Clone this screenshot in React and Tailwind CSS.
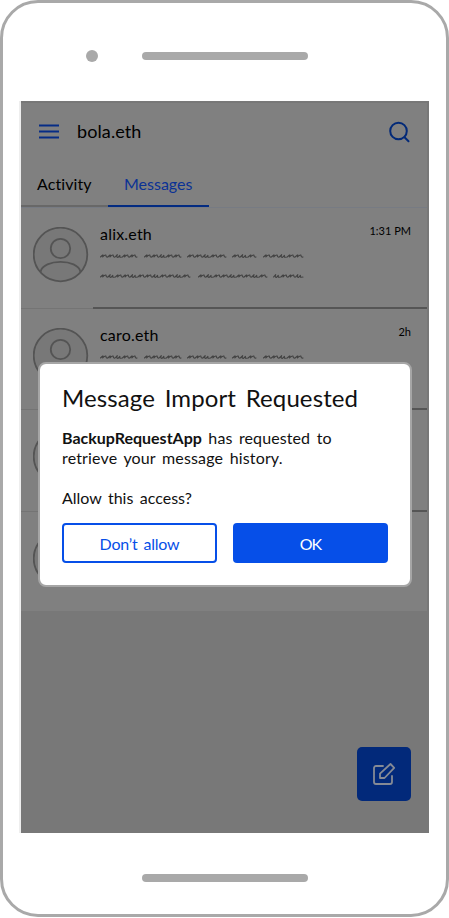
import React from "react";

const LINE_ONE = [[0, 37], [44, 37], [87, 39], [132, 24], [163, 40]];
const LINE_TWO = [[0, 90], [98, 69], [173, 30]];

// One handwritten placeholder word: arches and hooks joined by flat tails.
function scribble(x, width, y) {
  const count = Math.round(width / 7.6);
  const s = width / count;
  let d = `M${x} ${y + 1.2}`;
  for (let i = 0; i < count; i++) {
    d +=
      (i + count) % 3 === 1
        ? ` l${s * 0.3} -2.4 c-${s * 0.05} 1 -${s * 0.15} 3 ${s * 0.1} 2.8 l${s * 0.25} -2 c0 1 -${s * 0.05} 2 ${s * 0.1} 1.8 l${s * 0.25} -0.2`
        : ` l${s * 0.3} -2 c${s * 0.1} -0.2 ${s * 0.02} 1 0 2 c${s * 0.2} -2 ${s * 0.45} -2.4 ${s * 0.45} -1.4 c0 1.2 ${s * 0.1} 1.8 ${s * 0.25} 1.4`;
  }
  return d;
}

function Scribbles() {
  return (
    <svg className="block h-[34px] w-[206px]" viewBox="0 0 206 34" fill="none" stroke="#414141" strokeWidth="1.1" strokeLinecap="round" strokeLinejoin="round">
      {LINE_ONE.map(([x, w]) => <path key={x} d={scribble(x + 0.5, w - 0.5, 9.8)} />)}
      {LINE_TWO.map(([x, w]) => <path key={x} d={scribble(x + 0.5, w - 0.5, 29.8)} />)}
    </svg>
  );
}

function Avatar() {
  return (
    <svg className="ml-3 mt-[19px] block h-[56px] w-[56px] shrink-0" viewBox="0 0 56 56" fill="#787878" stroke="#545454" strokeWidth="1.8">
      <circle cx="27.5" cy="27.5" r="26.8" />
      <circle cx="27.5" cy="21.5" r="9.7" />
      <path d="M7.5 45C10 31.5 45 31.5 47.5 45" fill="none" />
    </svg>
  );
}

function Row({ name, time, last }) {
  return (
    <div className="flex h-[101.2px] shrink-0">
      <div className={`w-[72px] shrink-0 ${last ? "" : "border-b border-[#747474]"}`}>
        <Avatar />
      </div>
      <div className={`flex flex-1 justify-between pl-[7px] pr-4 ${last ? "" : "border-b-2 border-[#555]"}`}>
        <div className="pt-[14.3px]">
          <div className="h-6 text-[16px] leading-6 tracking-[0.2px]">{name}</div>
          <Scribbles />
        </div>
        <div className="whitespace-nowrap pt-[13.3px] text-[11px] leading-5">{time}</div>
      </div>
    </div>
  );
}

export default function App() {
  return (
    <div className="h-[918px] w-[449px] overflow-hidden bg-white font-['Lato','Noto_Sans',sans-serif] text-black">
      <div className="relative flex h-[917px] w-[449px] flex-col rounded-[38px] border-[3px] border-[#a9a9a9] pl-4">
        <div className="flex h-[98px] shrink-0 items-start">
          <div className="ml-[67px] mt-[47px] h-3 w-3 rounded-full bg-[#a9a9a9]" />
          <div className="ml-11 mt-[49px] h-[8px] w-[166px] rounded-full bg-[#a9a9a9]" />
        </div>

        <div className="flex h-[732px] w-[410px] shrink-0 flex-col border-l-2 border-[#eee] bg-[#787878]">
          <div className="mr-[2px] mt-[2px] h-[508px] shrink-0 overflow-hidden bg-[#808080]">
            <div className="flex h-[57px] items-center pl-[18px] pr-[17px]">
              <svg className="mt-1 h-5 w-5" viewBox="0 0 20 20" stroke="#062c86" strokeWidth="2">
                <path d="M0 1.5H20M0 7.5H20M0 13.5H20" />
              </svg>
              <div className="-mt-px ml-[18px] text-[18px] leading-6 tracking-[0.1px]">bola.eth</div>
              <svg className="ml-auto h-[22px] w-[22px]" viewBox="0 0 22 22" fill="none" stroke="#022978" strokeWidth="2" strokeLinecap="round">
                <circle cx="10.5" cy="10" r="8.3" />
                <path d="M16.5 16.3L20.5 20.3" />
              </svg>
            </div>
            <div className="flex h-[48px] items-start border-b border-[#777b83] text-[16px]">
              <div className="h-[47px] w-[87px] border-b-2 border-[#686868] pl-4 pt-[12px] leading-6 tracking-[0.1px]">Activity</div>
              <div className="h-[47px] w-[101px] border-b-2 border-[#032b81] pl-4 pt-[12px] leading-6 text-[#0b3295]">Messages</div>
            </div>
            <Row name="alix.eth" time="1:31 PM" />
            <Row name="caro.eth" time="2h" />
            <Row name="" time="" />
            <Row name="" time="" last />
          </div>
          <div className="ml-auto mr-[18px] mt-[136px] flex h-[54px] w-[54px] items-center justify-center rounded-[5px] bg-[#02297a]">
            <svg className="h-6 w-6" viewBox="0 0 24 24" fill="none" stroke="#858a95" strokeWidth="1.8" strokeLinejoin="round" strokeLinecap="round">
              <path d="M11 4H4a2 2 0 0 0-2 2v14a2 2 0 0 0 2 2h14a2 2 0 0 0 2-2v-6" />
              <path d="M18.5 2L22.2 5.8L12.5 16H8V11.7Z" />
            </svg>
          </div>
        </div>
        <div className="ml-[123px] mt-[41px] h-[8px] w-[166px] rounded-full bg-[#a9a9a9]" />

        <div role="dialog" className="absolute left-[35px] top-[359px] h-[225px] w-[374px] whitespace-nowrap rounded-[8px] border-2 border-[#a6a6a6] bg-white px-[22px] pt-[18px] text-[#111]">
          <h1 className="text-[24px] leading-8 tracking-[0.1px] [word-spacing:3.5px]">Message Import Requested</h1>
          <p className="mt-[14px] text-[16px] leading-5 tracking-[0.1px] [word-spacing:2.3px]"><b className="font-bold tracking-normal">BackupRequestApp</b> has requested to<br /><span className="tracking-[0.15px]">retrieve your message history.</span></p>
          <p className="mt-5 text-[16px] leading-5 [word-spacing:2.3px]">Allow this access?</p>
          <div className="mt-[15px] flex gap-4">
            <button className="h-10 w-[155px] rounded-[4px] border-2 border-[#064fe8] pt-[2px] text-[16px] tracking-[-0.2px] text-[#064fe8] [word-spacing:2px]">Don’t allow</button>
            <button className="h-10 w-[155px] rounded-[4px] bg-[#064fe8] pt-[2px] text-[16px] tracking-[-1px] text-white">OK</button>
          </div>
        </div>
      </div>
    </div>
  );
}
